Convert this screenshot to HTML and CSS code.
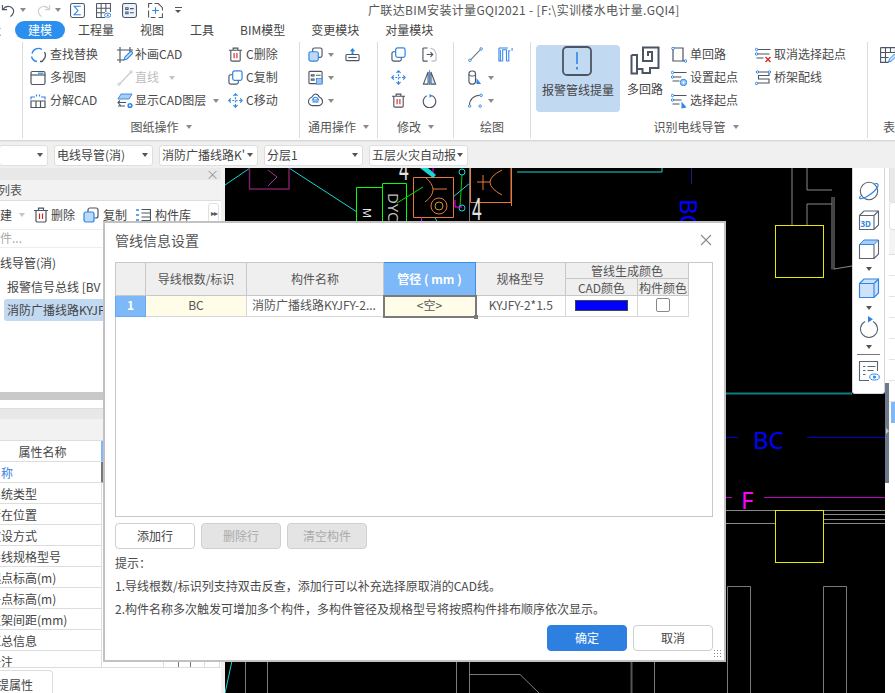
FILE: index.html
```html
<!DOCTYPE html>
<html lang="zh-CN">
<head>
<meta charset="utf-8">
<title>广联达BIM安装计量GQI2021</title>
<link rel="stylesheet" href="styles.css">
</head>
<body>
<svg class="sprite" aria-hidden="true">
  <defs>
    <symbol id="i-trash" viewBox="0 0 16 16"><path d="M1 3.500h14M5.500 3.500V1.200h5v2.300M3 3.500v10.300a1.200 1.200 0 0 0 1.200 1.200h7.600a1.200 1.200 0 0 0 1.200-1.200V3.500" fill="none" stroke="#4b5563" stroke-width="1.200"/><path d="M6.500 6.500v5.500M9.500 6.500v5.500" stroke="#e02020" stroke-width="1.200"/></symbol>
    <symbol id="i-copy" viewBox="0 0 16 16"><rect x="1" y="5" width="10" height="10" rx="2" fill="#fff" stroke="#4b5563" stroke-width="1.200"/><rect x="5" y="1" width="10" height="10" rx="2" fill="#fff" stroke="#2e86e8" stroke-width="1.300"/></symbol>
    <symbol id="i-copyf" viewBox="0 0 16 16"><rect x="5" y="1" width="10" height="10" rx="2" fill="#fff" stroke="#4b5563" stroke-width="1.200"/><rect x="1" y="5" width="10" height="10" rx="2" fill="#bcd9f7" stroke="#2e86e8" stroke-width="1.200"/></symbol>
    <symbol id="i-move" viewBox="0 0 16 16"><path d="M8 1v14M1 8h14" stroke="#2e86e8" stroke-width="1.200" stroke-dasharray="2 1.600" fill="none"/><path d="M5.800 3 8 .8 10.200 3M5.800 13 8 15.200 10.200 13M3 5.800.8 8 3 10.200M13 5.800 15.200 8 13 10.200" fill="none" stroke="#2e86e8" stroke-width="1.200"/></symbol>
    <symbol id="i-find" viewBox="0 0 16 16"><path d="M2 6.500A6.500 6.500 0 0 1 12 2.500" fill="none" stroke="#2e86e8" stroke-width="1.300"/><path d="M1.500 9.500 A6.500 6.500 0 0 0 7 14.500" fill="none" stroke="#2e86e8" stroke-width="1.300"/><path d="M14.500 5a6.500 6.500 0 0 1 0 6.500l-2.500 3h-2" fill="none" stroke="#4b5563" stroke-width="1.300"/></symbol>
    <symbol id="i-patch" viewBox="0 0 16 16"><path d="M3 0v16M0 3h16M13 0v6M0 13h7" fill="none" stroke="#4b5563" stroke-width="1.100"/><path d="M7 13l1-3 6-6 2 2-6 6z" fill="#cfe3fa" stroke="#2e86e8" stroke-width="1.100"/></symbol>
    <symbol id="i-win" viewBox="0 0 16 16"><rect x="1" y="1.500" width="14" height="13" rx="1.500" fill="none" stroke="#4b5563" stroke-width="1.200"/><path d="M1 5h14" stroke="#4b5563" stroke-width="1.200"/><path d="M8 3.200h5.500" stroke="#2e86e8" stroke-width="1.200"/></symbol>
    <symbol id="i-line" viewBox="0 0 16 16"><path d="M2.500 14 13.500 2.500" stroke="#c9c9c9" stroke-width="1.100"/><circle cx="2" cy="14.200" r="1.200" fill="none" stroke="#c9c9c9"/><circle cx="14" cy="2" r="1.200" fill="none" stroke="#c9c9c9"/></symbol>
    <symbol id="i-lineb" viewBox="0 0 16 16"><path d="M2.500 14 13.500 2.500" stroke="#6b7280" stroke-width="1.100"/><circle cx="2" cy="14.200" r="1.300" fill="#fff" stroke="#2e86e8"/><circle cx="14" cy="2" r="1.300" fill="#fff" stroke="#2e86e8"/></symbol>
    <symbol id="i-split" viewBox="0 0 16 16"><path d="M1 6.500v-2.500h4M15 6.500v-2.500h-4" fill="none" stroke="#2e86e8" stroke-width="1.200"/><path d="M6.500 1.500v2M9.500 1.500v2" stroke="#2e86e8" stroke-width="1.200"/><path d="M1 8h14v6.500H1zM6 8v6.500M10.500 8v6.500" fill="none" stroke="#4b5563" stroke-width="1.200"/></symbol>
    <symbol id="i-layer" viewBox="0 0 16 16"><path d="M4 1h11l-3 5H1z" fill="#a9cdf5" stroke="#2e86e8" stroke-width=".9"/><path d="M1 9.500h8M1 13h7M3 7.500l-2 2 3 3.500" fill="none" stroke="#4b5563" stroke-width="1.100"/><circle cx="13" cy="12.500" r="2.600" fill="#2e86e8"/><circle cx="13" cy="12.500" r="1" fill="#fff"/></symbol>
    <symbol id="i-props" viewBox="0 0 16 16"><rect x="1" y="1.500" width="14" height="13" rx="1" fill="none" stroke="#4b5563" stroke-width="1.200"/><path d="M3.500 5h3v1.500h-3zM3.500 9.500h3V11h-3zM8.500 5.700h5M8.500 10.200h2" fill="none" stroke="#4b5563" stroke-width="1.100"/><rect x="9" y="9" width="6" height="6" fill="#9cc7f5" stroke="#2e86e8" stroke-width=".8"/></symbol>
    <symbol id="i-up" viewBox="0 0 16 16"><path d="M8 1 5 4.500h2v3h2v-3h2z" fill="#2e86e8"/><rect x="1" y="8" width="14" height="6.500" rx="1" fill="none" stroke="#4b5563" stroke-width="1.200"/><path d="M3.500 11.200h9" stroke="#4b5563" stroke-width="1.200"/></symbol>
    <symbol id="i-cloud" viewBox="0 0 16 16"><path d="M4.200 4.200C5.500 2 7 1 8 1c1.500 0 3 1.200 4 3.200 2 .8 3.500 2.300 3.500 4.800 0 2.500-2 4.500-4 4.500H4.500C2.500 13.500.5 11.500.5 9 .5 6.500 2.200 5 4.200 4.200z" fill="none" stroke="#4b5563" stroke-width="1.200"/><path d="M4.800 7.500C5.500 5.500 6.700 4.500 8 4.500s2.500 1 3.200 3zM4.800 9.500h6.400" fill="none" stroke="#2e86e8" stroke-width="1.200"/></symbol>
    <symbol id="i-mirror" viewBox="0 0 16 16"><path d="M6.500 2v13H1.500z" fill="none" stroke="#4b5563" stroke-width="1.200"/><path d="M9.500 2v13h5z" fill="#cfe3fa" stroke="#4b5563" stroke-width="1.200"/><path d="M8 0v16" stroke="#2e86e8" stroke-width="1"/></symbol>
    <symbol id="i-rot" viewBox="0 0 16 16"><path d="M5 3A6.700 6.700 0 1 0 11 3" fill="none" stroke="#4b5563" stroke-width="1.200"/><path d="M8 1v4l3.500-2z" fill="#2e86e8"/></symbol>
    <symbol id="i-door" viewBox="0 0 16 16"><path d="M6 1H2a1 1 0 0 0-1 1v12a1 1 0 0 0 1 1h4M5 8h6M9 5.500 11.500 8 9 10.500" fill="none" stroke="#4b5563" stroke-width="1.200"/><path d="M9 1l4 2 2 4v7l-2 1h-3" fill="none" stroke="#b8bcc4" stroke-width="1.200"/></symbol>
    <symbol id="i-pipe" viewBox="0 0 16 16"><path d="M1 1h9.500M2.500 15V3M5 15V3h4v12" fill="none" stroke="#2e86e8" stroke-width="1.100"/><path d="M1 1v14h4M9 15h2.500V4H13M15 1v3" fill="none" stroke="#2e86e8" stroke-width="1.100"/></symbol>
    <symbol id="i-cyl" viewBox="0 0 16 16"><rect x="1" y="1" width="7" height="14" rx="3" fill="none" stroke="#4b5563" stroke-width="1.200"/><path d="M1 4.500a3.500 2 0 0 0 7 0" fill="none" stroke="#4b5563" stroke-width="1"/><path d="M9 8.500V15h5z" fill="#2e86e8"/></symbol>
    <symbol id="i-arc" viewBox="0 0 16 16"><path d="M1.500 13.500C1.500 7 6 2.500 13 2.500" fill="none" stroke="#4b5563" stroke-width="1.100"/><circle cx="1.700" cy="14" r="1.300" fill="#fff" stroke="#2e86e8"/><circle cx="14" cy="2.500" r="1.300" fill="#fff" stroke="#2e86e8"/><circle cx="13" cy="14" r="1.300" fill="#fff" stroke="#2e86e8"/></symbol>
    <symbol id="i-single" viewBox="0 0 16 16"><path d="M2 1h10v13h3M2 1v13h10" fill="none" stroke="#4b5563" stroke-width="1.200"/><circle cx="2" cy="1.500" r="1.300" fill="#fff" stroke="#2e86e8"/><circle cx="14.500" cy="14" r="1.300" fill="#fff" stroke="#2e86e8"/></symbol>
    <symbol id="i-setstart" viewBox="0 0 16 16"><path d="M1.500 2.500h14M1.500 7h9M1.500 11h7" fill="none" stroke="#4b5563" stroke-width="1.100"/><circle cx="1.500" cy="2.500" r="1.200" fill="#fff" stroke="#2e86e8"/><circle cx="1.500" cy="7" r="1.200" fill="#fff" stroke="#2e86e8"/><circle cx="12.500" cy="12.500" r="3.200" fill="#9cc7f5" stroke="#2e86e8"/><circle cx="12.500" cy="12.500" r="1" fill="#fff"/></symbol>
    <symbol id="i-selstart" viewBox="0 0 16 16"><path d="M1.500 2.500h14M1.500 7h9M1.500 11h7" fill="none" stroke="#4b5563" stroke-width="1.100"/><circle cx="1.500" cy="2.500" r="1.200" fill="#fff" stroke="#2e86e8"/><circle cx="1.500" cy="7" r="1.200" fill="#fff" stroke="#2e86e8"/><path d="M10.500 8.500v7l5-1z" fill="#2e86e8"/></symbol>
    <symbol id="i-cancel" viewBox="0 0 16 16"><path d="M1.500 2.500h14M1.500 7h13M1.500 11h7" fill="none" stroke="#4b5563" stroke-width="1.100"/><circle cx="1.500" cy="2.500" r="1.200" fill="#fff" stroke="#2e86e8"/><circle cx="1.500" cy="7" r="1.200" fill="#fff" stroke="#2e86e8"/><path d="M10.500 10l5 5M15.500 10l-5 5" stroke="#e02020" stroke-width="1.300"/></symbol>
    <symbol id="i-tray" viewBox="0 0 16 16"><path d="M3 2h11M14 2v3.500H3.500V9H14v4H1" fill="none" stroke="#4b5563" stroke-width="1.100"/><circle cx="2.500" cy="2" r="1.200" fill="#fff" stroke="#2e86e8"/><circle cx="14.500" cy="2" r="1.200" fill="#fff" stroke="#2e86e8"/><circle cx="1.500" cy="13.500" r="1.200" fill="#fff" stroke="#2e86e8"/></symbol>
    <symbol id="i-lib" viewBox="0 0 16 16"><path d="M6.500 2.500h9v11h-9M6.500 6h9M6.500 10h9" fill="none" stroke="#4b5563" stroke-width="1.200"/><path d="M1 3h3M1 8h3M1 13h3" stroke="#2e86e8" stroke-width="1.500"/></symbol>
    <symbol id="i-planet" viewBox="0 0 22 22"><circle cx="11" cy="11" r="8.700" fill="none" stroke="#5b6472" stroke-width="1.100"/><path d="M2.500 16C0 19 3 19.500 8 17c6-3 11-8 12-11 .7-2.500-1-3-4-2" fill="none" stroke="#2e86e8" stroke-width="1.200"/></symbol>
    <symbol id="i-cube3d" viewBox="0 0 22 22"><path d="M1.500 6.500 6 2h14.500v14L16 20.500H1.500zM1.500 6.500H16v14M16 6.500 20.500 2" fill="none" stroke="#5b6472" stroke-width="1.100"/><text x="2.500" y="18" class="cube-label">3D</text></symbol>
    <symbol id="i-cubetop" viewBox="0 0 22 22"><path d="M1.500 6.500 6 2h14.500L16 6.500z" fill="#a9cdf5" stroke="#2e86e8" stroke-width="1"/><path d="M1.500 6.500V20.500H16V6.500M16 20.500l4.500-4.500V2" fill="none" stroke="#5b6472" stroke-width="1.100"/></symbol>
    <symbol id="i-cubefill" viewBox="0 0 22 22"><path d="M1.500 6.500 6 2h14.500v14L16 20.500H1.500z" fill="#cfe2f9" stroke="#2e86e8" stroke-width="1.200"/><path d="M1.500 6.500H16v14M16 6.500 20.500 2" fill="none" stroke="#2e86e8" stroke-width="1.100"/></symbol>
    <symbol id="i-rot2" viewBox="0 0 22 22"><path d="M7 5.500a8.500 8.500 0 1 0 8 0" fill="none" stroke="#5b6472" stroke-width="1.100"/><path d="M10 0v6.500l5-3.200z" fill="#2e86e8"/></symbol>
    <symbol id="i-listeye" viewBox="0 0 22 22"><path d="M19.500 11V1.500H1.500v19h9.500" fill="none" stroke="#5b6472" stroke-width="1.100"/><path d="M5 6.500h2.500M9.500 6.500h8M5 10.500h2.500M9.500 10.500h6M5 14.500h2.500" stroke="#5b6472" stroke-width="1.100"/><ellipse cx="16.500" cy="17" rx="4.800" ry="3" fill="#fff" stroke="#2e86e8"/><circle cx="16.500" cy="17" r="1.600" fill="#2e86e8"/></symbol>
    <symbol id="i-undo" viewBox="0 0 16 16"><path d="M1.500 2v5h5M2 7c2-3 5-4 8-3 3 1.500 4 4.500 3 7-.5 1.300-1.500 2.500-3 3.500" fill="none" stroke="#4b5563" stroke-width="1.200"/></symbol>
    <symbol id="i-redo" viewBox="0 0 16 16"><path d="M14.500 2v5h-5M14 7c-2-3-5-4-8-3-3 1.500-4 4.500-3 7 .5 1.300 1.500 2.500 3 3.500" fill="none" stroke="#cfcfcf" stroke-width="1.200"/></symbol>
    <symbol id="i-sum" viewBox="0 0 16 16"><rect x=".6" y=".6" width="14.800" height="14.800" rx="2" fill="none" stroke="#4b5563" stroke-width="1.100"/><path d="M11.500 3.500h-7L8.500 8l-4 4.500h7" fill="none" stroke="#2e86e8" stroke-width="1.200"/></symbol>
    <symbol id="i-gridq" viewBox="0 0 16 16"><path d="M.6.600h14.800v9M.6.600v14.800h9M.6 5.500h14.800M.6 10.500h9M5.500.6v14.800M10.500.6v9" fill="none" stroke="#4b5563" stroke-width="1.100"/><ellipse cx="12.500" cy="13" rx="3.300" ry="2.300" fill="#fff" stroke="#2e86e8"/><circle cx="12.500" cy="13" r="1" fill="#2e86e8"/></symbol>
    <symbol id="i-listq" viewBox="0 0 16 16"><rect x=".6" y=".6" width="14.800" height="14.800" rx="2" fill="#eaf3fd" stroke="#4b5563" stroke-width="1.100"/><path d="M4 5h2.500v2H4zM4 9.500h2.500v2H4zM8.500 6h4M8.500 10.500h4" fill="none" stroke="#4b5563" stroke-width="1.100"/></symbol>
    <symbol id="i-selq" viewBox="0 0 16 16"><path d="M.6 5V.6h4M7 .6h4l4.400 4.400v3M15.400 11v4.400h-4M8 15.400H3M.6 8v7.400" fill="none" stroke="#4b5563" stroke-width="1.100"/><path d="M8 4.500v7M4.500 8h7" stroke="#2e86e8" stroke-width="1.200"/></symbol>
    <symbol id="i-tablepen" viewBox="0 0 16 16"><path d="M.6.600h14.800M.6.600v14.800h8M.6 5.500h14.800M.6 10.500h8M5.500.6v14.800M10.500.6v5M15.400.6v5" fill="none" stroke="#4b5563" stroke-width="1.100"/><path d="M8.500 15l1-3 5-5 2 2-5 5z" fill="#cfe3fa" stroke="#2e86e8"/></symbol>
  </defs>
</svg>

<div class="app">
  <header class="quickbar">
    <svg class="qi"><use href="#i-undo"/></svg><i class="caret q-caret"></i>
    <svg class="qi q-redo"><use href="#i-redo"/></svg><i class="caret q-caret q-light"></i>
    <svg class="qi q-sum"><use href="#i-sum"/></svg>
    <svg class="qi q-next"><use href="#i-gridq"/></svg>
    <svg class="qi q-next"><use href="#i-listq"/></svg>
    <svg class="qi q-next"><use href="#i-selq"/></svg>
    <span class="q-more"></span>
    <span class="app-title">广联达BIM安装计量GQI2021 - [F:\实训楼水电计量.GQI4]</span>
  </header>

  <nav class="tabs">
    <span class="tab tab-first">造</span>
    <span class="tab tab-active">建模</span>
    <span class="tab">工程量</span>
    <span class="tab">视图</span>
    <span class="tab">工具</span>
    <span class="tab">BIM模型</span>
    <span class="tab">变更模块</span>
    <span class="tab">对量模块</span>
  </nav>

  <section class="ribbon">
    <div class="group g0"><div class="g-body"></div></div>

    <div class="group g1">
      <div class="g-body">
        <div class="col c1">
          <div class="rb"><svg class="ic"><use href="#i-find"/></svg>查找替换</div>
          <div class="rb"><svg class="ic"><use href="#i-win"/></svg>多视图</div>
          <div class="rb"><svg class="ic"><use href="#i-split"/></svg>分解CAD</div>
        </div>
        <div class="col c2">
          <div class="rb"><svg class="ic"><use href="#i-patch"/></svg>补画CAD</div>
          <div class="rb rb-off"><svg class="ic"><use href="#i-line"/></svg>直线<i class="caret caret-l"></i></div>
          <div class="rb"><svg class="ic"><use href="#i-layer"/></svg>显示CAD图层<i class="caret"></i></div>
        </div>
        <div class="col c3">
          <div class="rb"><svg class="ic"><use href="#i-trash"/></svg>C删除</div>
          <div class="rb"><svg class="ic"><use href="#i-copy"/></svg>C复制</div>
          <div class="rb"><svg class="ic"><use href="#i-move"/></svg>C移动</div>
        </div>
      </div>
      <div class="g-label">图纸操作<i class="caret"></i></div>
    </div>

    <div class="group g2">
      <div class="g-body">
        <div class="col c-icons c21">
          <div class="rb"><svg class="ic"><use href="#i-copyf"/></svg><i class="caret"></i></div>
          <div class="rb"><svg class="ic"><use href="#i-props"/></svg><i class="caret"></i></div>
          <div class="rb"><svg class="ic"><use href="#i-cloud"/></svg><i class="caret"></i></div>
        </div>
        <div class="col c-icons c22">
          <div class="rb"><svg class="ic"><use href="#i-up"/></svg></div>
        </div>
      </div>
      <div class="g-label">通用操作<i class="caret"></i></div>
    </div>

    <div class="group g3">
      <div class="g-body">
        <div class="col c-icons c31">
          <div class="rb"><svg class="ic"><use href="#i-copy"/></svg></div>
          <div class="rb"><svg class="ic"><use href="#i-move"/></svg></div>
          <div class="rb"><svg class="ic"><use href="#i-trash"/></svg></div>
        </div>
        <div class="col c-icons c32">
          <div class="rb"><svg class="ic"><use href="#i-door"/></svg></div>
          <div class="rb"><svg class="ic"><use href="#i-mirror"/></svg></div>
          <div class="rb"><svg class="ic"><use href="#i-rot"/></svg></div>
        </div>
      </div>
      <div class="g-label">修改<i class="caret"></i></div>
    </div>

    <div class="group g4">
      <div class="g-body">
        <div class="col c-icons c41">
          <div class="rb"><svg class="ic"><use href="#i-lineb"/></svg></div>
          <div class="rb"><svg class="ic"><use href="#i-cyl"/></svg><i class="caret"></i></div>
          <div class="rb"><svg class="ic"><use href="#i-arc"/></svg><i class="caret"></i></div>
        </div>
        <div class="col c-icons c42">
          <div class="rb"><svg class="ic"><use href="#i-pipe"/></svg></div>
        </div>
      </div>
      <div class="g-label">绘图</div>
    </div>

    <div class="group g5">
      <div class="g-body">
        <div class="big big-on">
          <svg class="big-ic big-alert" viewBox="0 0 30 30"><rect x="1" y="1" width="28" height="28" rx="4" fill="none" stroke="#4b5563" stroke-width="1.800"/><path d="M15 6v12" stroke="#2e86e8" stroke-width="1.600"/><path d="M15 21v2.500" stroke="#2e86e8" stroke-width="1.800"/></svg>
          <span>报警管线提量</span>
        </div>
        <div class="big big-multi">
          <svg class="big-ic" viewBox="0 0 30 30"><path d="M1.500 9H7V23H12.500V27H20V22H28.500V1.500H13V15H22V6H18V10M1.500 9V27.500H7V23" fill="none" stroke="#4b5563" stroke-width="2"/></svg>
          <span>多回路</span>
        </div>
        <div class="col c51">
          <div class="rb"><svg class="ic"><use href="#i-single"/></svg>单回路</div>
          <div class="rb"><svg class="ic"><use href="#i-setstart"/></svg>设置起点</div>
          <div class="rb"><svg class="ic"><use href="#i-selstart"/></svg>选择起点</div>
        </div>
        <div class="col c52">
          <div class="rb"><svg class="ic"><use href="#i-cancel"/></svg>取消选择起点</div>
          <div class="rb"><svg class="ic"><use href="#i-tray"/></svg>桥架配线</div>
        </div>
      </div>
      <div class="g-label g-label-5">识别电线导管<i class="caret"></i></div>
    </div>

    <div class="group g6">
      <div class="g-body"><div class="col c61"><div class="rb"><svg class="ic"><use href="#i-tablepen"/></svg></div></div></div>
      <div class="g-label g-label-left">表格</div>
    </div>
  </section>

  <section class="filterbar">
    <div class="combo combo-first"><i class="caret caret-d caret-end"></i></div>
    <div class="combo combo-w"><span>电线导管(消)</span><i class="caret caret-d"></i></div>
    <div class="combo combo-w"><span>消防广播线路K'</span><i class="caret caret-d"></i></div>
    <div class="combo combo-w"><span>分层1</span><i class="caret caret-d"></i></div>
    <div class="combo combo-w"><span>五层火灾自动报</span><i class="caret caret-d"></i></div>
  </section>

  <main class="work">
    <aside class="left">
      <div class="strip"><span class="strip-x">×</span></div>
      <div class="panel-title"><span>构件列表</span></div>
      <div class="left-tools">
        <span class="lt-new">新建<i class="caret caret-l"></i></span>
        <span class="lt lt-del"><svg class="ic"><use href="#i-trash"/></svg>删除</span>
        <span class="lt"><svg class="ic"><use href="#i-copyf"/></svg>复制</span>
        <span class="lt"><svg class="ic"><use href="#i-lib"/></svg>构件库</span>
        <span class="lt-more">▸▸</span>
      </div>
      <div class="left-search"><span>搜索构件...</span></div>
      <ul class="tree">
        <li class="tree-root"><span>电线导管(消)</span></li>
        <li class="tree-leaf">报警信号总线 [BV</li>
        <li class="tree-leaf tree-sel">消防广播线路KYJF</li>
      </ul>
      <div class="hscroll"></div>
      <div class="strip strip-2"></div>
      <div class="panel-title panel-title-2"></div>
      <div class="attrs">
        <div class="attr attr-head">属性名称</div>
        <div class="attr attr-blue">名称</div>
        <div class="attr">系统类型</div>
        <div class="attr">所在位置</div>
        <div class="attr">敷设方式</div>
        <div class="attr">导线规格型号</div>
        <div class="attr">起点标高(m)</div>
        <div class="attr">终点标高(m)</div>
        <div class="attr">支架间距(mm)</div>
        <div class="attr">汇总信息</div>
        <div class="attr">备注</div>
        <svg class="attr-ticks" viewBox="0 0 118 7"><path d="M0 6.500H118M61.500 0V7M117.500 0V7" fill="none" stroke="#dcdcdc"/><path d="M76.500 0V7M88.500 0V7" stroke="#777"/><path d="M102.500 0V7" stroke="#dcdcdc"/></svg>
      </div>
      <div class="left-foot">
        <span class="foot-tab">提属性</span>
      </div>
    </aside>

    <div class="canvas">
      <svg class="cad" viewBox="225 168 660 525" xmlns="http://www.w3.org/2000/svg">
        <g fill="none">
          <path d="M225 185 250 168M289 168 357 212M517 172H662V168" stroke="#17d6d6" stroke-width="1"/>
          <path d="M249.500 168V189H289V168" stroke="#7a1f66" stroke-width="1.500"/>
          <path d="M268 170 277 177 268 186" stroke="#a8308f" stroke-width="1"/>
          <path d="M356.500 222V187.500H382.500V222M382.500 187.500V183.500H406.500V222" stroke="#00ff00" stroke-width="1"/>
          <path d="M413.500 177.500H453.500V217.500H413.500ZM470.500 168V202.500H511V168" stroke="#e57a3c" stroke-width="1"/>
          <path d="M425 177Q441 190 425 202M433 189H447M502 170Q478 182 502 195M477 182H490M483 175V190" stroke="#e57a3c" stroke-width="1"/>
          <circle cx="439" cy="206" r="8" stroke="#e57a3c" stroke-width="1"/>
          <circle cx="439" cy="206" r="4" stroke="#cc9a20" stroke-width="1"/>
          <path d="M397 203 423 187" stroke="#00dd00"/>
          <path d="M462 175 460 207" stroke="#00cc00"/>
          <path d="M453 197 470 183M435 217 437 222" stroke="#17d6d6"/>
          <circle cx="462" cy="172" r="3" stroke="#17d6d6"/>
          <circle cx="462" cy="208" r="3" stroke="#17d6d6"/>
          <path d="M455 207H462M455 200V207M433 168V175M421.500 217V222" stroke="#ff00ff"/>
          <path d="M469.500 168V222" stroke="#777"/>
          <path d="M225 693 232 661" stroke="#17d6d6"/>
          <path d="M792 168V225M807 168V190H832M807 225V204H832M832 197V269.500M834 197V269.500M834 269 852 266" stroke="#8a8a8a" stroke-width="1"/>
          <path d="M511.500 168V206" stroke="#e57a3c"/>
          <path d="M691.500 168V184" stroke="#1a1a90"/>
          <rect x="775.500" y="225.500" width="48" height="52" stroke="#e8e800"/>
          <rect x="775.500" y="510.500" width="48" height="52" stroke="#e8e800"/>
          <path d="M724 393.500H852" stroke="#0c8080" stroke-width="2"/>
          <path d="M724 437.500H738M807 437.500H885" stroke="#0000d0"/>
          <path d="M724 497.500H732M764 497.500H885" stroke="#c000c0"/>
          <path d="M724 510.500H775M724 523.500H775M824 510.500H885M824 514.500H885M824 519.500H885M824 523.500H885" stroke="#8a8a8a"/>
          <path d="M727.500 693V586.500H750.500V693M823.500 693V586.500H846.500V693" stroke="#7a7a7a"/>
          <path d="M245.500 661V693M267.500 661V693M456.500 661V693M469.500 661V693M469.500 674.500H520L539 693M654.500 661V693" stroke="#7a7a7a"/>
          <path d="M631.500 661V693" stroke="#555" stroke-width="2"/>
        </g>
        <path d="M420 168H428L436 175 433 178Z" fill="#17d6d6"/>
        <text transform="translate(399 180) scale(.55 1)" class="cad-text cad-white cad-four">4</text>
        <text transform="translate(472 220) scale(.55 1)" class="cad-text cad-white cad-four">4</text>
        <text transform="translate(363 208) rotate(90)" class="cad-text cad-white cad-small">M</text>
        <text transform="translate(388 193) rotate(90)" class="cad-text cad-gray cad-mid">DYC</text>
        <text transform="translate(680 199) rotate(90)" class="cad-text cad-blue cad-big">BC</text>
        <text x="753" y="449" class="cad-text cad-blue cad-big">BC</text>
        <text x="741" y="509" class="cad-text cad-pink cad-big">F</text>
      </svg>

      <div class="viewbar">
        <svg class="vi vi-first"><use href="#i-planet"/></svg>
        <svg class="vi"><use href="#i-cube3d"/></svg>
        <svg class="vi"><use href="#i-cubetop"/></svg>
        <i class="vcaret"></i>
        <svg class="vi"><use href="#i-cubefill"/></svg>
        <i class="vcaret"></i>
        <svg class="vi"><use href="#i-rot2"/></svg>
        <i class="vcaret"></i>
        <span class="vsep"></span>
        <svg class="vi"><use href="#i-listeye"/></svg>
      </div>
    </div>

    <aside class="right-sliver">
      <div class="sliver-scroll"></div>
      <div class="sliver-rows">
        <span class="s-head"></span>
        <span class="s-tool"></span>
        <span class="s-search"></span>
        <span class="s-row"></span>
        <span class="s-row"></span>
        <span class="s-row"></span>
        <span class="s-row"></span>
        <span class="s-row"></span>
        <span class="s-row"></span>
        <span class="s-row"></span>
        <span class="s-blue"></span>
      </div>
    </aside>
  </main>

  <div class="dialog">
    <div class="d-head">
      <span class="d-title">管线信息设置</span>
      <svg class="d-close" viewBox="0 0 12 12"><path d="M1 1l10 10M11 1 1 11" stroke="#8a8a8a" stroke-width="1.100"/></svg>
    </div>
    <div class="grid">
      <table class="gt">
        <colgroup>
          <col class="w0"><col class="w1"><col class="w2"><col class="w3"><col class="w4"><col class="w5"><col class="w6">
        </colgroup>
        <thead>
          <tr class="r-h1">
            <th rowspan="2"></th>
            <th rowspan="2">导线根数/标识</th>
            <th rowspan="2">构件名称</th>
            <th rowspan="2" class="th-sel">管径 ( mm )</th>
            <th rowspan="2">规格型号</th>
            <th colspan="2">管线生成颜色</th>
          </tr>
          <tr class="r-h2">
            <th>CAD颜色</th>
            <th>构件颜色</th>
          </tr>
        </thead>
        <tbody>
          <tr class="r-b">
            <td class="td-num">1</td>
            <td class="td-y">BC</td>
            <td class="td-name">消防广播线路KYJFY-2...</td>
            <td class="td-y td-cur">&lt;空&gt;<i class="cur-dot"></i></td>
            <td>KYJFY-2*1.5</td>
            <td><span class="swatch"></span></td>
            <td><span class="check"></span></td>
          </tr>
        </tbody>
      </table>
    </div>
    <div class="d-actions">
      <button class="btn">添加行</button>
      <button class="btn btn-off">删除行</button>
      <button class="btn btn-off">清空构件</button>
    </div>
    <p class="hint hint-1">提示：</p>
    <p class="hint">1.导线根数/标识列支持双击反查，添加行可以补充选择原取消的CAD线。</p>
    <p class="hint">2.构件名称多次触发可增加多个构件，多构件管径及规格型号将按照构件排布顺序依次显示。</p>
    <div class="d-foot">
      <button class="btn btn-primary">确定</button>
      <button class="btn">取消</button>
    </div>
    <span class="grip"></span>
  </div>
</div>
</body>
</html>
```

FILE: styles.css
```css
* { box-sizing: border-box; }
html, body { margin: 0; padding: 0; }
body {
  width: 895px; height: 693px; overflow: hidden; background: #fff;
  font: 12px/1.2 "Noto Sans CJK SC", "Microsoft YaHei", "Noto Sans", sans-serif;
  color: #4a4a4a;
}
.sprite { position: absolute; width: 0; height: 0; }
.app { position: relative; width: 895px; height: 693px; overflow: hidden; display: flex; flex-direction: column; }
svg { display: block; flex: none; }

/* title bar */
.quickbar { height: 20px; display: flex; align-items: center; padding-left: 1px; background: #fff; flex: none; }
.qi { width: 15px; height: 15px; }
.q-redo { margin-left: 10px; }
.q-sum { margin-left: 9px; }
.q-next { margin-left: 11px; }
.q-caret { margin-left: 4px; }
.q-light { border-top-color: #c8c8c8; }
.q-more { width: 7px; height: 6px; margin-left: 12px; border-top: 1px solid #555; position: relative; flex: none; }
.q-more::after { content: ""; position: absolute; left: 0; top: 2px; border: 3.500px solid transparent; border-top-color: #555; }
.app-title { margin-left: 186px; white-space: nowrap; color: #555; letter-spacing: .33px; }

/* tabs */
.tabs { height: 20px; display: flex; align-items: center; flex: none; background: #fff; }
.tab { padding: 0 13px; line-height: 18px; white-space: nowrap; color: #444; }
.tab-first { margin-left: -11px; width: 26px; overflow: hidden; padding: 0; }
.tab-active { background: #2b8ff0; color: #fff; border-radius: 9px; }

/* ribbon */
.ribbon { height: 101px; flex: none; display: flex; border-bottom: 1px solid #d8d8d8; background: #fff; padding-top: 2px; }
.group { display: flex; flex-direction: column; border-right: 1px solid #dcdcdc; height: 96px; flex: none; }
.g0 { width: 23px; }
.g1 { width: 277px; }
.g2 { width: 78px; }
.g3 { width: 76px; }
.g4 { width: 77px; }
.g5 { width: 337px; }
.g6 { width: 27px; border-right: 0; }
.g-body { height: 74px; display: flex; padding-top: 1px; }
.g-label { height: 22px; display: flex; align-items: center; justify-content: center; gap: 7px; color: #555; white-space: nowrap; }
.g-label-5 { padding-right: 6px; }
.g-label-left { justify-content: flex-start; padding-left: 15px; }
.col { display: flex; flex-direction: column; flex: none; }
.rb { height: 23px; display: flex; align-items: center; white-space: nowrap; gap: 4px; }
.ic { width: 16px; height: 16px; }
.rb-off { color: #bdbdbd; }
.c1 { margin-left: 7px; width: 87px; }
.c2 { width: 111px; }
.c2 .rb { gap: 2px; }
.c2 .caret { margin-left: 5px; }
.c2 .caret-l { margin-left: 8px; }
.c3 .rb { gap: 3px; }
.c3 .ic { width: 15px; height: 15px; }
.c-icons .rb { gap: 5px; }
.c21 { margin-left: 8px; width: 37px; }
.c31 { margin-left: 13px; width: 31px; }
.c41 { margin-left: 14px; width: 30px; }
.c-icons .ic { width: 15px; height: 15px; }
.c51 { margin-left: 6px; width: 84px; }
.c51 .rb, .c52 .rb { gap: 3px; }
.c61 { margin-left: 12px; }
.caret { display: inline-block; width: 0; height: 0; border: 3px solid transparent; border-top: 4px solid #8b8b8b; border-bottom: 0; flex: none; }
.caret-l { border-top-color: #c4c4c4; }
.big { display: flex; flex-direction: column; align-items: center; border-radius: 4px; flex: none; color: #444; }
.big-on { width: 84px; height: 67px; margin: 2px 0 0 5px; background: #c2d9f2; padding-top: 1px; gap: 6px; }
.big-alert { margin-right: 3px; }
.big-multi { width: 40px; margin-left: 5px; padding-top: 3px; gap: 6px; }
.big-ic { width: 30px; height: 30px; }
.big-on span { line-height: 16px; }

/* filter bar */
.filterbar { height: 27px; flex: none; background: #f0f0f0; display: flex; align-items: center; gap: 6px; border-top: 1px solid #e6e6e6; }
.combo { height: 21px; background: #fff; border: 1px solid #dedede; border-radius: 3px; display: flex; align-items: center; justify-content: space-between; padding: 0 4px 0 2px; white-space: nowrap; overflow: hidden; color: #444; flex: none; }
.combo span { overflow: hidden; }
.combo-first { width: 49px; margin-left: -1px; }
.combo-w { width: 99px; }
.caret-d { border-top-color: #555; }
.caret-end { margin-left: auto; }

/* work area */
.work { flex: 1; display: flex; min-height: 0; }
.left { width: 225px; flex: none; background: #fff; display: flex; flex-direction: column; overflow: hidden; border-right: 4px solid #f0f0f0; }
.strip { height: 12px; flex: none; background: #e8e8e8; display: flex; justify-content: flex-end; align-items: center; padding-right: 2px; }
.strip-x { color: #999; font-size: 13px; line-height: 12px; }
.panel-title { height: 21px; flex: none; background: #f2f2f2; display: flex; align-items: center; border-bottom: 1px solid #ddd; }
.panel-title span { margin-left: -26px; color: #555; white-space: nowrap; }
.left-tools { height: 29px; flex: none; display: flex; align-items: center; border-bottom: 1px solid #eee; position: relative; white-space: nowrap; color: #444; }
.lt { display: flex; align-items: center; gap: 4px; flex: none; margin-right: 8px; }
.lt-new { margin-left: -12px; width: 45px; display: flex; align-items: center; gap: 7px; flex: none; }
.lt-del { gap: 2px; }
.lt-more { position: absolute; left: 208px; top: 2px; width: 11px; height: 20px; border: 1px solid #e0e0e0; border-radius: 3px; font-size: 8px; letter-spacing: -1px; line-height: 18px; text-align: center; color: #555; overflow: hidden; }
.left-search { height: 18px; flex: none; display: flex; align-items: center; color: #aaa; border-bottom: 1px solid #eee; white-space: nowrap; }
.left-search span { margin-left: -36px; }
.tree { list-style: none; margin: 0; padding: 3px 0 0; height: 144px; flex: none; }
.tree li { height: 24px; line-height: 24px; white-space: nowrap; color: #444; }
.tree-root span { margin-left: -12px; display: inline-block; }
.tree-leaf { margin-left: 7px; }
.tree .tree-sel { margin-left: 4px; padding-left: 3px; background: #c2d9f2; border-radius: 3px; width: 110px; height: 22px; line-height: 22px; }
.hscroll { height: 8px; flex: none; background: #c9c9c9; }
.strip-2 { margin-top: 8px; height: 11px; border-top: 1px solid #ddd; }
.panel-title-2 { height: 22px; }
.attrs { flex: none; position: relative; height: 227px; overflow: hidden; border-bottom: 1px solid #ddd; }
.attr { height: 21px; line-height: 22px; border-bottom: 1px solid #ddd; width: 102px; border-right: 1px solid #ddd; white-space: nowrap; overflow: hidden; color: #444; text-indent: -11px; }
.attr-head { text-indent: 0; text-align: center; padding-right: 16px; border-right: 3px solid #7db8f8; width: 104px; }
.attr-blue { color: #3d7fe0; border-right: 3px solid #777; width: 104px; }
.attr-ticks { position: absolute; left: 102px; bottom: -1px; width: 118px; height: 7px; }
.left-foot { height: 23px; margin-top: 2px; flex: none; }
.foot-tab { display: block; width: 53px; height: 24px; border: 1px solid #ddd; border-left: 0; border-bottom: 0; border-radius: 0 4px 0 0; text-indent: -3px; line-height: 27px; white-space: nowrap; overflow: hidden; color: #444; }

.canvas { position: relative; flex: none; width: 660px; background: #000; overflow: hidden; }
.cad { position: absolute; left: 0; top: 0; width: 660px; height: 525px; }
.cad-text { font-family: "Noto Sans", sans-serif; }
.cad-white { fill: #e4e4e4; }
.cad-gray { fill: #bdbdbd; }
.cad-blue { fill: #0000ff; }
.cad-pink { fill: #ff00ff; }
.cad-four { font-size: 32px; font-family: "Liberation Sans", sans-serif; }
.cad-small { font-size: 11px; }
.cad-mid { font-size: 15px; }
.cad-big { font-size: 24px; }
.cube-label { font: bold 8px "Noto Sans", sans-serif; fill: #2e86e8; }

.viewbar { position: absolute; right: 0; top: 0; width: 33px; height: 226px; background: #fff; border: 1px solid #d6d6d6; border-top: 0; border-radius: 0 0 3px 3px; display: flex; flex-direction: column; align-items: center; }
.vi { width: 22px; height: 22px; margin-top: 7px; }
.vi-first { margin-top: 12px; }
.vcaret { width: 0; height: 0; border: 3px solid transparent; border-top: 4px solid #555; border-bottom: 0; margin-top: 7px; flex: none; }
.vcaret + .vi { margin-top: 6px; }
.vsep { width: 23px; height: 1px; background: #777; margin-top: 5px; flex: none; }
.vsep + .vi { margin-top: 5px; }

.right-sliver { flex: 1; position: relative; background: #fff; display: flex; }
.sliver-scroll { position: absolute; left: 0; top: 215px; width: 4px; height: 100px; background: #6c7a89; }
.sliver-scroll::after { content: ""; position: absolute; left: 1px; top: 45px; border: 3px solid transparent; border-left-color: #c8c8c8; }
.sliver-rows { margin-left: 4px; flex: 1; display: flex; flex-direction: column; }
.sliver-rows span { display: block; flex: none; }
.s-head { height: 34px; background: #e8e8e8; border-left: 1px solid #ddd; }
.s-tool { height: 28px; background: #fff; border: 1px solid #e0e0e0; border-right: 0; border-radius: 4px 0 0 4px; }
.s-search { height: 25px; background: #f4f4f4; border-bottom: 1px solid #ddd; }
.s-row { height: 21px; border-bottom: 1px solid #e4e4e4; }
.s-blue { height: 21px; margin-left: 2px; background: #7db8f8; }

/* dialog */
.dialog { position: absolute; left: 103px; top: 221px; width: 623px; height: 441px; background: #fff; border: 2px solid #c2c2c2; padding: 0 11px 0 10px; display: flex; flex-direction: column; }
.d-head { height: 39px; flex: none; display: flex; align-items: flex-start; justify-content: space-between; padding: 7px 1px 0 0; }
.d-title { font-size: 14px; line-height: 20px; color: #555; }
.d-close { width: 12px; height: 12px; margin-top: 4px; }
.grid { height: 255px; flex: none; border: 1px solid #c8c8c8; width: 598px; }
.gt { border-collapse: collapse; table-layout: fixed; width: 572px; color: #555; margin: -1px 0 0 -1px; }
.w0 { width: 30px; } .w1 { width: 101px; } .w2 { width: 137px; } .w3 { width: 92px; } .w4 { width: 90px; } .w5 { width: 72px; } .w6 { width: 51px; }
.gt th { background: #efefef; font-weight: 400; border: 1px solid #c8c8c8; padding: 0; }
.gt td { border: 1px solid #d8d8d8; padding: 0 0 2px; text-align: center; height: 21px; white-space: nowrap; overflow: hidden; }
.r-h1 th { height: 16px; line-height: 14px; }
.r-h2 th { height: 17px; line-height: 15px; white-space: nowrap; }
.gt .th-sel { background: #7db8f8; color: #fff; border: 1px solid #3b8de8; font-weight: 700; }
.gt .td-num { background: #7db8f8; color: #fff; font-weight: 700; border-color: #6aa8ee; }
.gt .td-y { background: #fffde8; }
.gt .td-name { text-align: left; padding-left: 5px; }
.gt .td-cur { border: 2px solid #7a7a7a; overflow: visible; position: relative; }
.cur-dot { position: absolute; right: -3px; bottom: -3px; width: 4px; height: 4px; background: #7a7a7a; }
.swatch { display: block; width: 53px; height: 11px; margin: 0 auto; background: #0000ff; border: 1px solid #444; }
.check { display: block; width: 14px; height: 14px; margin: 0 auto; border: 1px solid #888; border-radius: 2px; }
.d-actions { display: flex; gap: 6px; margin-top: 6px; flex: none; }
.btn { width: 80px; height: 26px; border: 1px solid #cfcfcf; border-radius: 4px; background: #fff; font: inherit; color: #444; padding: 0; }
.btn-off { background: #e4e4e4; color: #aaa; }
.btn-primary { background: #2e80e0; border-color: #2e80e0; color: #fff; }
.hint { margin: 0; height: 23px; line-height: 23px; white-space: nowrap; color: #4a4a4a; flex: none; }
.hint-1 { margin-top: 2px; }
.d-foot { display: flex; justify-content: flex-end; gap: 6px; margin-top: 5px; flex: none; }
.grip { position: absolute; right: 2px; bottom: 2px; width: 9px; height: 9px; background: radial-gradient(circle, #888 40%, transparent 45%) 0 0 / 3px 3px; }
```
